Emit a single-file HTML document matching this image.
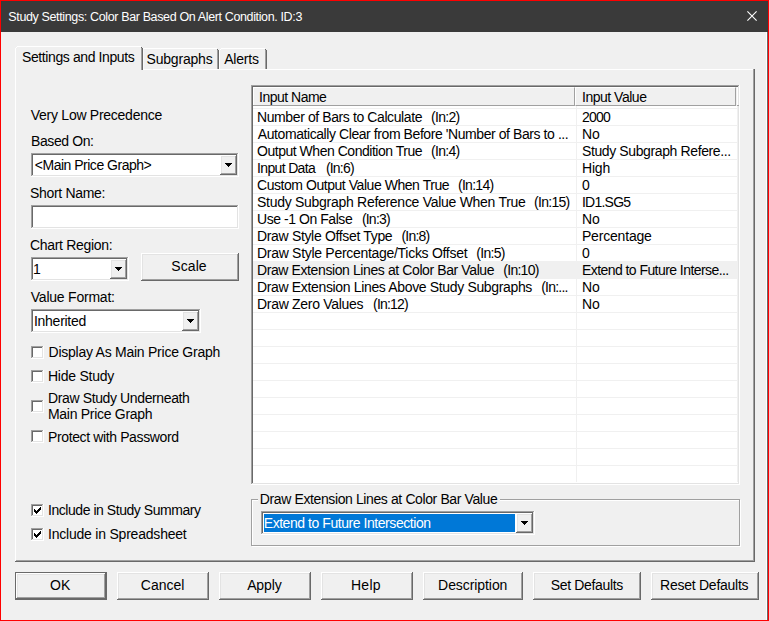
<!DOCTYPE html>
<html><head><meta charset="utf-8">
<style>
*{margin:0;padding:0;box-sizing:border-box}
html,body{width:769px;height:621px;overflow:hidden;background:#f0f0f0}
body{position:relative;font-family:"Liberation Sans",sans-serif;font-size:14px;color:#000}
.a{position:absolute}
.t{position:absolute;white-space:nowrap;line-height:16px;font-size:14px}
.sk{position:absolute;border:1px solid;border-color:#a0a0a0 #fff #fff #a0a0a0}
.sk>.in{position:absolute;left:0;top:0;right:0;bottom:0;border:1px solid;border-color:#696969 #e3e3e3 #e3e3e3 #696969;background:#fff}
.bt{position:absolute;border:1px solid;border-color:#fff #696969 #696969 #fff;background:#f0f0f0}
.bt>.in{position:absolute;left:0;top:0;right:0;bottom:0;border:1px solid;border-color:#e3e3e3 #a0a0a0 #a0a0a0 #e3e3e3}
.arr{position:absolute;width:7px;height:4px}
.arr svg{display:block}
.cb{position:absolute;width:13px;height:13px;border:1px solid;border-color:#a0a0a0 #fff #fff #a0a0a0}
.cb>.in{position:absolute;left:0;top:0;right:0;bottom:0;border:1px solid;border-color:#696969 #e3e3e3 #e3e3e3 #696969;background:#fff}
.ck{position:absolute;left:1px;top:1px}
</style></head><body>
<div class="a" style="left:0;top:0;width:769px;height:621px;border:1px solid #f00"></div>
<div class="a" style="left:1px;top:1px;width:767px;height:31px;background:#3a3a3a"></div>
<svg class="a" style="left:746px;top:10px" width="12" height="12" viewBox="0 0 12 12"><path d="M1.4 1.4L10.6 10.6M10.6 1.4L1.4 10.6" stroke="#fff" stroke-width="1.1"/></svg>
<div class="a" style="left:766px;top:32px;width:1px;height:588px;background:#fff"></div>
<div class="a" style="left:767px;top:32px;width:1px;height:588px;background:#696969"></div>

<div class="a" style="left:15px;top:69px;width:739px;height:1px;background:#fff"></div>
<div class="a" style="left:15px;top:69px;width:1px;height:492px;background:#fff"></div>
<div class="a" style="left:753px;top:69px;width:1px;height:492px;background:#a0a0a0"></div>
<div class="a" style="left:754px;top:69px;width:1px;height:493px;background:#696969"></div>
<div class="a" style="left:16px;top:560px;width:737px;height:1px;background:#a0a0a0"></div>
<div class="a" style="left:15px;top:561px;width:740px;height:1px;background:#696969"></div>
<div class="a" style="left:143px;top:48px;width:74px;height:1px;background:#fff"></div>
<div class="a" style="left:143px;top:49px;width:1px;height:20px;background:#f8f8f8"></div>
<div class="a" style="left:217px;top:49px;width:1px;height:20px;background:#a0a0a0"></div>
<div class="a" style="left:217px;top:49px;width:1px;height:1px;background:#696969"></div>
<div class="a" style="left:218px;top:50px;width:1px;height:19px;background:#696969"></div>
<div class="a" style="left:221px;top:48px;width:44px;height:1px;background:#fff"></div>
<div class="a" style="left:220px;top:49px;width:1px;height:1px;background:#fff"></div>
<div class="a" style="left:219px;top:50px;width:1px;height:19px;background:#fff"></div>
<div class="a" style="left:265px;top:49px;width:1px;height:20px;background:#a0a0a0"></div>
<div class="a" style="left:265px;top:49px;width:1px;height:1px;background:#696969"></div>
<div class="a" style="left:266px;top:50px;width:1px;height:19px;background:#696969"></div>
<div class="a" style="left:15px;top:46px;width:128px;height:25px;background:#f0f0f0"></div>
<div class="a" style="left:17px;top:46px;width:124px;height:1px;background:#fff"></div>
<div class="a" style="left:16px;top:47px;width:1px;height:1px;background:#fff"></div>
<div class="a" style="left:15px;top:48px;width:1px;height:23px;background:#fff"></div>
<div class="a" style="left:141px;top:47px;width:1px;height:23px;background:#a0a0a0"></div>
<div class="a" style="left:141px;top:47px;width:1px;height:1px;background:#696969"></div>
<div class="a" style="left:142px;top:48px;width:1px;height:22px;background:#696969"></div>

<div class="a" style="left:33px;top:155px;width:204px;height:20px;background:#fff"></div><div class="a" style="left:31px;top:153px;width:207px;height:1px;background:#a0a0a0"></div><div class="a" style="left:31px;top:153px;width:1px;height:23px;background:#a0a0a0"></div><div class="a" style="left:31px;top:176px;width:208px;height:1px;background:#fff"></div><div class="a" style="left:238px;top:153px;width:1px;height:24px;background:#fff"></div><div class="a" style="left:32px;top:154px;width:205px;height:1px;background:#696969"></div><div class="a" style="left:32px;top:154px;width:1px;height:21px;background:#696969"></div><div class="a" style="left:32px;top:175px;width:206px;height:1px;background:#e3e3e3"></div><div class="a" style="left:237px;top:154px;width:1px;height:22px;background:#e3e3e3"></div>
<div class="a" style="left:222px;top:157px;width:13px;height:16px;background:#f0f0f0"></div><div class="a" style="left:220px;top:155px;width:16px;height:1px;background:#fff"></div><div class="a" style="left:220px;top:155px;width:1px;height:19px;background:#fff"></div><div class="a" style="left:220px;top:174px;width:17px;height:1px;background:#696969"></div><div class="a" style="left:236px;top:155px;width:1px;height:20px;background:#696969"></div><div class="a" style="left:221px;top:156px;width:14px;height:1px;background:#e3e3e3"></div><div class="a" style="left:221px;top:156px;width:1px;height:17px;background:#e3e3e3"></div><div class="a" style="left:221px;top:173px;width:15px;height:1px;background:#a0a0a0"></div><div class="a" style="left:235px;top:156px;width:1px;height:18px;background:#a0a0a0"></div>
<div class="arr" style="left:225px;top:163px"><svg width="7" height="4" viewBox="0 0 7 4" shape-rendering="crispEdges"><path d="M0 0h7v1h-7zM1 1h5v1h-5zM2 2h3v1h-3zM3 3h1v1h-1z" fill="#000"/></svg></div>

<div class="a" style="left:33px;top:207px;width:204px;height:20px;background:#fff"></div><div class="a" style="left:31px;top:205px;width:207px;height:1px;background:#a0a0a0"></div><div class="a" style="left:31px;top:205px;width:1px;height:23px;background:#a0a0a0"></div><div class="a" style="left:31px;top:228px;width:208px;height:1px;background:#fff"></div><div class="a" style="left:238px;top:205px;width:1px;height:24px;background:#fff"></div><div class="a" style="left:32px;top:206px;width:205px;height:1px;background:#696969"></div><div class="a" style="left:32px;top:206px;width:1px;height:21px;background:#696969"></div><div class="a" style="left:32px;top:227px;width:206px;height:1px;background:#e3e3e3"></div><div class="a" style="left:237px;top:206px;width:1px;height:22px;background:#e3e3e3"></div>

<div class="a" style="left:33px;top:259px;width:94px;height:20px;background:#fff"></div><div class="a" style="left:31px;top:257px;width:97px;height:1px;background:#a0a0a0"></div><div class="a" style="left:31px;top:257px;width:1px;height:23px;background:#a0a0a0"></div><div class="a" style="left:31px;top:280px;width:98px;height:1px;background:#fff"></div><div class="a" style="left:128px;top:257px;width:1px;height:24px;background:#fff"></div><div class="a" style="left:32px;top:258px;width:95px;height:1px;background:#696969"></div><div class="a" style="left:32px;top:258px;width:1px;height:21px;background:#696969"></div><div class="a" style="left:32px;top:279px;width:96px;height:1px;background:#e3e3e3"></div><div class="a" style="left:127px;top:258px;width:1px;height:22px;background:#e3e3e3"></div>
<div class="a" style="left:112px;top:261px;width:13px;height:16px;background:#f0f0f0"></div><div class="a" style="left:110px;top:259px;width:16px;height:1px;background:#fff"></div><div class="a" style="left:110px;top:259px;width:1px;height:19px;background:#fff"></div><div class="a" style="left:110px;top:278px;width:17px;height:1px;background:#696969"></div><div class="a" style="left:126px;top:259px;width:1px;height:20px;background:#696969"></div><div class="a" style="left:111px;top:260px;width:14px;height:1px;background:#e3e3e3"></div><div class="a" style="left:111px;top:260px;width:1px;height:17px;background:#e3e3e3"></div><div class="a" style="left:111px;top:277px;width:15px;height:1px;background:#a0a0a0"></div><div class="a" style="left:125px;top:260px;width:1px;height:18px;background:#a0a0a0"></div>
<div class="arr" style="left:115px;top:267px"><svg width="7" height="4" viewBox="0 0 7 4" shape-rendering="crispEdges"><path d="M0 0h7v1h-7zM1 1h5v1h-5zM2 2h3v1h-3zM3 3h1v1h-1z" fill="#000"/></svg></div>
<div class="a" style="left:143px;top:255px;width:94px;height:24px;background:#f0f0f0"></div><div class="a" style="left:141px;top:253px;width:97px;height:1px;background:#fff"></div><div class="a" style="left:141px;top:253px;width:1px;height:27px;background:#fff"></div><div class="a" style="left:141px;top:280px;width:98px;height:1px;background:#696969"></div><div class="a" style="left:238px;top:253px;width:1px;height:28px;background:#696969"></div><div class="a" style="left:142px;top:254px;width:95px;height:1px;background:#e3e3e3"></div><div class="a" style="left:142px;top:254px;width:1px;height:25px;background:#e3e3e3"></div><div class="a" style="left:142px;top:279px;width:96px;height:1px;background:#a0a0a0"></div><div class="a" style="left:237px;top:254px;width:1px;height:26px;background:#a0a0a0"></div>

<div class="a" style="left:33px;top:311px;width:166px;height:20px;background:#fff"></div><div class="a" style="left:31px;top:309px;width:169px;height:1px;background:#a0a0a0"></div><div class="a" style="left:31px;top:309px;width:1px;height:23px;background:#a0a0a0"></div><div class="a" style="left:31px;top:332px;width:170px;height:1px;background:#fff"></div><div class="a" style="left:200px;top:309px;width:1px;height:24px;background:#fff"></div><div class="a" style="left:32px;top:310px;width:167px;height:1px;background:#696969"></div><div class="a" style="left:32px;top:310px;width:1px;height:21px;background:#696969"></div><div class="a" style="left:32px;top:331px;width:168px;height:1px;background:#e3e3e3"></div><div class="a" style="left:199px;top:310px;width:1px;height:22px;background:#e3e3e3"></div>
<div class="a" style="left:184px;top:313px;width:13px;height:16px;background:#f0f0f0"></div><div class="a" style="left:182px;top:311px;width:16px;height:1px;background:#fff"></div><div class="a" style="left:182px;top:311px;width:1px;height:19px;background:#fff"></div><div class="a" style="left:182px;top:330px;width:17px;height:1px;background:#696969"></div><div class="a" style="left:198px;top:311px;width:1px;height:20px;background:#696969"></div><div class="a" style="left:183px;top:312px;width:14px;height:1px;background:#e3e3e3"></div><div class="a" style="left:183px;top:312px;width:1px;height:17px;background:#e3e3e3"></div><div class="a" style="left:183px;top:329px;width:15px;height:1px;background:#a0a0a0"></div><div class="a" style="left:197px;top:312px;width:1px;height:18px;background:#a0a0a0"></div>
<div class="arr" style="left:187px;top:319px"><svg width="7" height="4" viewBox="0 0 7 4" shape-rendering="crispEdges"><path d="M0 0h7v1h-7zM1 1h5v1h-5zM2 2h3v1h-3zM3 3h1v1h-1z" fill="#000"/></svg></div>

<div class="a" style="left:33px;top:348px;width:9px;height:9px;background:#fff"></div><div class="a" style="left:31px;top:346px;width:12px;height:1px;background:#a0a0a0"></div><div class="a" style="left:31px;top:346px;width:1px;height:12px;background:#a0a0a0"></div><div class="a" style="left:31px;top:358px;width:13px;height:1px;background:#fff"></div><div class="a" style="left:43px;top:346px;width:1px;height:13px;background:#fff"></div><div class="a" style="left:32px;top:347px;width:10px;height:1px;background:#696969"></div><div class="a" style="left:32px;top:347px;width:1px;height:10px;background:#696969"></div><div class="a" style="left:32px;top:357px;width:11px;height:1px;background:#e3e3e3"></div><div class="a" style="left:42px;top:347px;width:1px;height:11px;background:#e3e3e3"></div>
<div class="a" style="left:33px;top:372px;width:9px;height:9px;background:#fff"></div><div class="a" style="left:31px;top:370px;width:12px;height:1px;background:#a0a0a0"></div><div class="a" style="left:31px;top:370px;width:1px;height:12px;background:#a0a0a0"></div><div class="a" style="left:31px;top:382px;width:13px;height:1px;background:#fff"></div><div class="a" style="left:43px;top:370px;width:1px;height:13px;background:#fff"></div><div class="a" style="left:32px;top:371px;width:10px;height:1px;background:#696969"></div><div class="a" style="left:32px;top:371px;width:1px;height:10px;background:#696969"></div><div class="a" style="left:32px;top:381px;width:11px;height:1px;background:#e3e3e3"></div><div class="a" style="left:42px;top:371px;width:1px;height:11px;background:#e3e3e3"></div>
<div class="a" style="left:33px;top:402px;width:9px;height:9px;background:#fff"></div><div class="a" style="left:31px;top:400px;width:12px;height:1px;background:#a0a0a0"></div><div class="a" style="left:31px;top:400px;width:1px;height:12px;background:#a0a0a0"></div><div class="a" style="left:31px;top:412px;width:13px;height:1px;background:#fff"></div><div class="a" style="left:43px;top:400px;width:1px;height:13px;background:#fff"></div><div class="a" style="left:32px;top:401px;width:10px;height:1px;background:#696969"></div><div class="a" style="left:32px;top:401px;width:1px;height:10px;background:#696969"></div><div class="a" style="left:32px;top:411px;width:11px;height:1px;background:#e3e3e3"></div><div class="a" style="left:42px;top:401px;width:1px;height:11px;background:#e3e3e3"></div>
<div class="a" style="left:33px;top:432px;width:9px;height:9px;background:#fff"></div><div class="a" style="left:31px;top:430px;width:12px;height:1px;background:#a0a0a0"></div><div class="a" style="left:31px;top:430px;width:1px;height:12px;background:#a0a0a0"></div><div class="a" style="left:31px;top:442px;width:13px;height:1px;background:#fff"></div><div class="a" style="left:43px;top:430px;width:1px;height:13px;background:#fff"></div><div class="a" style="left:32px;top:431px;width:10px;height:1px;background:#696969"></div><div class="a" style="left:32px;top:431px;width:1px;height:10px;background:#696969"></div><div class="a" style="left:32px;top:441px;width:11px;height:1px;background:#e3e3e3"></div><div class="a" style="left:42px;top:431px;width:1px;height:11px;background:#e3e3e3"></div>
<div class="a" style="left:33px;top:506px;width:9px;height:9px;background:#fff"></div><div class="a" style="left:31px;top:504px;width:12px;height:1px;background:#a0a0a0"></div><div class="a" style="left:31px;top:504px;width:1px;height:12px;background:#a0a0a0"></div><div class="a" style="left:31px;top:516px;width:13px;height:1px;background:#fff"></div><div class="a" style="left:43px;top:504px;width:1px;height:13px;background:#fff"></div><div class="a" style="left:32px;top:505px;width:10px;height:1px;background:#696969"></div><div class="a" style="left:32px;top:505px;width:1px;height:10px;background:#696969"></div><div class="a" style="left:32px;top:515px;width:11px;height:1px;background:#e3e3e3"></div><div class="a" style="left:42px;top:505px;width:1px;height:11px;background:#e3e3e3"></div><div class="a" style="left:33px;top:506px"><svg style="display:block" width="9" height="9" viewBox="0 0 9 9" shape-rendering="crispEdges"><path d="M7 1h1v1h-1zM6 2h2v1h-2zM1 3h1v1h-1zM5 3h3v1h-3zM1 4h2v1h-2zM4 4h3v1h-3zM1 5h5v1h-5zM2 6h3v1h-3zM3 7h1v1h-1z" fill="#000"/></svg></div>
<div class="a" style="left:33px;top:530px;width:9px;height:9px;background:#fff"></div><div class="a" style="left:31px;top:528px;width:12px;height:1px;background:#a0a0a0"></div><div class="a" style="left:31px;top:528px;width:1px;height:12px;background:#a0a0a0"></div><div class="a" style="left:31px;top:540px;width:13px;height:1px;background:#fff"></div><div class="a" style="left:43px;top:528px;width:1px;height:13px;background:#fff"></div><div class="a" style="left:32px;top:529px;width:10px;height:1px;background:#696969"></div><div class="a" style="left:32px;top:529px;width:1px;height:10px;background:#696969"></div><div class="a" style="left:32px;top:539px;width:11px;height:1px;background:#e3e3e3"></div><div class="a" style="left:42px;top:529px;width:1px;height:11px;background:#e3e3e3"></div><div class="a" style="left:33px;top:530px"><svg style="display:block" width="9" height="9" viewBox="0 0 9 9" shape-rendering="crispEdges"><path d="M7 1h1v1h-1zM6 2h2v1h-2zM1 3h1v1h-1zM5 3h3v1h-3zM1 4h2v1h-2zM4 4h3v1h-3zM1 5h5v1h-5zM2 6h3v1h-3zM3 7h1v1h-1z" fill="#000"/></svg></div>

<div class="a" style="left:253px;top:87px;width:485px;height:396px;background:#fff"></div><div class="a" style="left:251px;top:85px;width:488px;height:1px;background:#a0a0a0"></div><div class="a" style="left:251px;top:85px;width:1px;height:399px;background:#a0a0a0"></div><div class="a" style="left:251px;top:484px;width:489px;height:1px;background:#fff"></div><div class="a" style="left:739px;top:85px;width:1px;height:400px;background:#fff"></div><div class="a" style="left:252px;top:86px;width:486px;height:1px;background:#696969"></div><div class="a" style="left:252px;top:86px;width:1px;height:397px;background:#696969"></div><div class="a" style="left:252px;top:483px;width:487px;height:1px;background:#e3e3e3"></div><div class="a" style="left:738px;top:86px;width:1px;height:398px;background:#e3e3e3"></div>
<div class="a" style="left:253px;top:87px;width:484px;height:19px;background:#f0f0f0"></div>
<div class="a" style="left:253px;top:87px;width:322px;height:19px;border:1px solid;border-color:#fff #a0a0a0 #a0a0a0 #fff"></div>
<div class="a" style="left:575px;top:87px;width:161px;height:19px;border:1px solid;border-color:#fff #a0a0a0 #a0a0a0 #fff"></div>
<div class="a" style="left:253px;top:105px;width:322px;height:1px;background:#a0a0a0"></div>
<div class="a" style="left:737px;top:105px;width:2px;height:1px;background:#a0a0a0"></div>
<div class="a" style="left:737px;top:106px;width:1px;height:376px;background:#f0f0f0"></div>
<div class="a" style="left:253px;top:261px;width:485px;height:18px;background:#f0f0f0"></div>
<div class="a" style="left:253px;top:108px;width:485px;height:1px;background:#f0f0f0"></div>
<div class="a" style="left:253px;top:125px;width:485px;height:1px;background:#f0f0f0"></div>
<div class="a" style="left:253px;top:142px;width:485px;height:1px;background:#f0f0f0"></div>
<div class="a" style="left:253px;top:159px;width:485px;height:1px;background:#f0f0f0"></div>
<div class="a" style="left:253px;top:176px;width:485px;height:1px;background:#f0f0f0"></div>
<div class="a" style="left:253px;top:193px;width:485px;height:1px;background:#f0f0f0"></div>
<div class="a" style="left:253px;top:210px;width:485px;height:1px;background:#f0f0f0"></div>
<div class="a" style="left:253px;top:227px;width:485px;height:1px;background:#f0f0f0"></div>
<div class="a" style="left:253px;top:244px;width:485px;height:1px;background:#f0f0f0"></div>
<div class="a" style="left:253px;top:261px;width:485px;height:1px;background:#f0f0f0"></div>
<div class="a" style="left:253px;top:278px;width:485px;height:1px;background:#f0f0f0"></div>
<div class="a" style="left:253px;top:295px;width:485px;height:1px;background:#f0f0f0"></div>
<div class="a" style="left:253px;top:312px;width:485px;height:1px;background:#f0f0f0"></div>
<div class="a" style="left:253px;top:329px;width:485px;height:1px;background:#f0f0f0"></div>
<div class="a" style="left:253px;top:346px;width:485px;height:1px;background:#f0f0f0"></div>
<div class="a" style="left:253px;top:363px;width:485px;height:1px;background:#f0f0f0"></div>
<div class="a" style="left:253px;top:380px;width:485px;height:1px;background:#f0f0f0"></div>
<div class="a" style="left:253px;top:397px;width:485px;height:1px;background:#f0f0f0"></div>
<div class="a" style="left:253px;top:414px;width:485px;height:1px;background:#f0f0f0"></div>
<div class="a" style="left:253px;top:431px;width:485px;height:1px;background:#f0f0f0"></div>
<div class="a" style="left:253px;top:448px;width:485px;height:1px;background:#f0f0f0"></div>
<div class="a" style="left:253px;top:465px;width:485px;height:1px;background:#f0f0f0"></div>
<div class="a" style="left:576px;top:106px;width:1px;height:376px;background:#f0f0f0"></div>

<div class="a" style="left:252px;top:500px;width:489px;height:47px;border:1px solid #fff"></div>
<div class="a" style="left:251px;top:499px;width:489px;height:47px;border:1px solid #a0a0a0"></div>
<div class="a" style="left:258px;top:499px;width:242px;height:2px;background:#f0f0f0"></div>
<div class="a" style="left:263px;top:513px;width:270px;height:20px;background:#fff"></div><div class="a" style="left:261px;top:511px;width:273px;height:1px;background:#a0a0a0"></div><div class="a" style="left:261px;top:511px;width:1px;height:23px;background:#a0a0a0"></div><div class="a" style="left:261px;top:534px;width:274px;height:1px;background:#fff"></div><div class="a" style="left:534px;top:511px;width:1px;height:24px;background:#fff"></div><div class="a" style="left:262px;top:512px;width:271px;height:1px;background:#696969"></div><div class="a" style="left:262px;top:512px;width:1px;height:21px;background:#696969"></div><div class="a" style="left:262px;top:533px;width:272px;height:1px;background:#e3e3e3"></div><div class="a" style="left:533px;top:512px;width:1px;height:22px;background:#e3e3e3"></div>
<div class="a" style="left:263px;top:513px;width:253px;height:20px;background:#0078d7;border:1px solid #fff"></div>
<div class="a" style="left:518px;top:515px;width:13px;height:16px;background:#f0f0f0"></div><div class="a" style="left:516px;top:513px;width:16px;height:1px;background:#fff"></div><div class="a" style="left:516px;top:513px;width:1px;height:19px;background:#fff"></div><div class="a" style="left:516px;top:532px;width:17px;height:1px;background:#696969"></div><div class="a" style="left:532px;top:513px;width:1px;height:20px;background:#696969"></div><div class="a" style="left:517px;top:514px;width:14px;height:1px;background:#e3e3e3"></div><div class="a" style="left:517px;top:514px;width:1px;height:17px;background:#e3e3e3"></div><div class="a" style="left:517px;top:531px;width:15px;height:1px;background:#a0a0a0"></div><div class="a" style="left:531px;top:514px;width:1px;height:18px;background:#a0a0a0"></div>
<div class="arr" style="left:521px;top:521px"><svg width="7" height="4" viewBox="0 0 7 4" shape-rendering="crispEdges"><path d="M0 0h7v1h-7zM1 1h5v1h-5zM2 2h3v1h-3zM3 3h1v1h-1z" fill="#000"/></svg></div>

<div class="a" style="left:15px;top:572px;width:92px;height:28px;border:1px solid #696969"></div>
<div class="a" style="left:18px;top:575px;width:86px;height:22px;background:#f0f0f0"></div><div class="a" style="left:16px;top:573px;width:89px;height:1px;background:#fff"></div><div class="a" style="left:16px;top:573px;width:1px;height:25px;background:#fff"></div><div class="a" style="left:16px;top:598px;width:90px;height:1px;background:#696969"></div><div class="a" style="left:105px;top:573px;width:1px;height:26px;background:#696969"></div><div class="a" style="left:17px;top:574px;width:87px;height:1px;background:#e3e3e3"></div><div class="a" style="left:17px;top:574px;width:1px;height:23px;background:#e3e3e3"></div><div class="a" style="left:17px;top:597px;width:88px;height:1px;background:#a0a0a0"></div><div class="a" style="left:104px;top:574px;width:1px;height:24px;background:#a0a0a0"></div>
<div class="a" style="left:119px;top:574px;width:88px;height:24px;background:#f0f0f0"></div><div class="a" style="left:117px;top:572px;width:91px;height:1px;background:#fff"></div><div class="a" style="left:117px;top:572px;width:1px;height:27px;background:#fff"></div><div class="a" style="left:117px;top:599px;width:92px;height:1px;background:#696969"></div><div class="a" style="left:208px;top:572px;width:1px;height:28px;background:#696969"></div><div class="a" style="left:118px;top:573px;width:89px;height:1px;background:#e3e3e3"></div><div class="a" style="left:118px;top:573px;width:1px;height:25px;background:#e3e3e3"></div><div class="a" style="left:118px;top:598px;width:90px;height:1px;background:#a0a0a0"></div><div class="a" style="left:207px;top:573px;width:1px;height:26px;background:#a0a0a0"></div>
<div class="a" style="left:221px;top:574px;width:88px;height:24px;background:#f0f0f0"></div><div class="a" style="left:219px;top:572px;width:91px;height:1px;background:#fff"></div><div class="a" style="left:219px;top:572px;width:1px;height:27px;background:#fff"></div><div class="a" style="left:219px;top:599px;width:92px;height:1px;background:#696969"></div><div class="a" style="left:310px;top:572px;width:1px;height:28px;background:#696969"></div><div class="a" style="left:220px;top:573px;width:89px;height:1px;background:#e3e3e3"></div><div class="a" style="left:220px;top:573px;width:1px;height:25px;background:#e3e3e3"></div><div class="a" style="left:220px;top:598px;width:90px;height:1px;background:#a0a0a0"></div><div class="a" style="left:309px;top:573px;width:1px;height:26px;background:#a0a0a0"></div>
<div class="a" style="left:323px;top:574px;width:88px;height:24px;background:#f0f0f0"></div><div class="a" style="left:321px;top:572px;width:91px;height:1px;background:#fff"></div><div class="a" style="left:321px;top:572px;width:1px;height:27px;background:#fff"></div><div class="a" style="left:321px;top:599px;width:92px;height:1px;background:#696969"></div><div class="a" style="left:412px;top:572px;width:1px;height:28px;background:#696969"></div><div class="a" style="left:322px;top:573px;width:89px;height:1px;background:#e3e3e3"></div><div class="a" style="left:322px;top:573px;width:1px;height:25px;background:#e3e3e3"></div><div class="a" style="left:322px;top:598px;width:90px;height:1px;background:#a0a0a0"></div><div class="a" style="left:411px;top:573px;width:1px;height:26px;background:#a0a0a0"></div>
<div class="a" style="left:425px;top:574px;width:96px;height:24px;background:#f0f0f0"></div><div class="a" style="left:423px;top:572px;width:99px;height:1px;background:#fff"></div><div class="a" style="left:423px;top:572px;width:1px;height:27px;background:#fff"></div><div class="a" style="left:423px;top:599px;width:100px;height:1px;background:#696969"></div><div class="a" style="left:522px;top:572px;width:1px;height:28px;background:#696969"></div><div class="a" style="left:424px;top:573px;width:97px;height:1px;background:#e3e3e3"></div><div class="a" style="left:424px;top:573px;width:1px;height:25px;background:#e3e3e3"></div><div class="a" style="left:424px;top:598px;width:98px;height:1px;background:#a0a0a0"></div><div class="a" style="left:521px;top:573px;width:1px;height:26px;background:#a0a0a0"></div>
<div class="a" style="left:535px;top:574px;width:104px;height:24px;background:#f0f0f0"></div><div class="a" style="left:533px;top:572px;width:107px;height:1px;background:#fff"></div><div class="a" style="left:533px;top:572px;width:1px;height:27px;background:#fff"></div><div class="a" style="left:533px;top:599px;width:108px;height:1px;background:#696969"></div><div class="a" style="left:640px;top:572px;width:1px;height:28px;background:#696969"></div><div class="a" style="left:534px;top:573px;width:105px;height:1px;background:#e3e3e3"></div><div class="a" style="left:534px;top:573px;width:1px;height:25px;background:#e3e3e3"></div><div class="a" style="left:534px;top:598px;width:106px;height:1px;background:#a0a0a0"></div><div class="a" style="left:639px;top:573px;width:1px;height:26px;background:#a0a0a0"></div>
<div class="a" style="left:653px;top:574px;width:104px;height:24px;background:#f0f0f0"></div><div class="a" style="left:651px;top:572px;width:107px;height:1px;background:#fff"></div><div class="a" style="left:651px;top:572px;width:1px;height:27px;background:#fff"></div><div class="a" style="left:651px;top:599px;width:108px;height:1px;background:#696969"></div><div class="a" style="left:758px;top:572px;width:1px;height:28px;background:#696969"></div><div class="a" style="left:652px;top:573px;width:105px;height:1px;background:#e3e3e3"></div><div class="a" style="left:652px;top:573px;width:1px;height:25px;background:#e3e3e3"></div><div class="a" style="left:652px;top:598px;width:106px;height:1px;background:#a0a0a0"></div><div class="a" style="left:757px;top:573px;width:1px;height:26px;background:#a0a0a0"></div>
<div class="t" style="left:8.30px;top:9px;letter-spacing:-0.364px;color:#fff;font-size:12.5px">Study Settings: Color Bar Based On Alert Condition. ID:3</div>
<div class="t" style="left:146.54px;top:51px;letter-spacing:-0.200px;">Subgraphs</div>
<div class="t" style="left:224.26px;top:51px;letter-spacing:-0.224px;">Alerts</div>
<div class="t" style="left:22.00px;top:49px;letter-spacing:-0.400px;">Settings and Inputs</div>
<div class="t" style="left:30.80px;top:107px;letter-spacing:-0.267px;">Very Low Precedence</div>
<div class="t" style="left:31.00px;top:133px;letter-spacing:-0.400px;">Based On:</div>
<div class="t" style="left:34.80px;top:157px;letter-spacing:-0.494px;">&lt;Main Price Graph&gt;</div>
<div class="t" style="left:30.00px;top:185px;letter-spacing:-0.320px;">Short Name:</div>
<div class="t" style="left:30.00px;top:237px;letter-spacing:-0.307px;">Chart Region:</div>
<div class="t" style="left:33.10px;top:261px;letter-spacing:0.000px;">1</div>
<div class="t" style="left:171.36px;top:258px;letter-spacing:0.060px;">Scale</div>
<div class="t" style="left:30.80px;top:289px;letter-spacing:-0.227px;">Value Format:</div>
<div class="t" style="left:34.00px;top:313px;letter-spacing:-0.280px;">Inherited</div>
<div class="t" style="left:48.54px;top:344px;letter-spacing:-0.249px;">Display As Main Price Graph</div>
<div class="t" style="left:48.00px;top:368px;letter-spacing:-0.249px;">Hide Study</div>
<div class="t" style="left:48.00px;top:390px;letter-spacing:-0.376px;">Draw Study Underneath</div>
<div class="t" style="left:48.00px;top:406px;letter-spacing:-0.293px;">Main Price Graph</div>
<div class="t" style="left:48.00px;top:429px;letter-spacing:-0.376px;">Protect with Password</div>
<div class="t" style="left:48.00px;top:502px;letter-spacing:-0.452px;">Include in Study Summary</div>
<div class="t" style="left:48.00px;top:526px;letter-spacing:-0.213px;">Include in Spreadsheet</div>
<div class="t" style="left:259.00px;top:89px;letter-spacing:-0.498px;">Input Name</div>
<div class="t" style="left:582.00px;top:89px;letter-spacing:-0.488px;">Input Value</div>
<div class="t" style="left:257.00px;top:109px;letter-spacing:-0.400px;">Number of Bars to Calculate</div>
<div class="t" style="left:431.00px;top:109px;letter-spacing:-0.688px;">(In:2)</div>
<div class="t" style="left:581.96px;top:109px;letter-spacing:-0.800px;">2000</div>
<div class="t" style="left:257.80px;top:126px;letter-spacing:-0.423px;">Automatically Clear from Before 'Number of Bars to ...</div>
<div class="t" style="left:581.96px;top:126px;letter-spacing:0.000px;">No</div>
<div class="t" style="left:257.00px;top:143px;letter-spacing:-0.474px;">Output When Condition True</div>
<div class="t" style="left:431.00px;top:143px;letter-spacing:-0.688px;">(In:4)</div>
<div class="t" style="left:581.96px;top:143px;letter-spacing:-0.383px;">Study Subgraph Refere...</div>
<div class="t" style="left:257.00px;top:160px;letter-spacing:-0.649px;">Input Data</div>
<div class="t" style="left:325.90px;top:160px;letter-spacing:-0.800px;">(In:6)</div>
<div class="t" style="left:581.96px;top:160px;letter-spacing:-0.187px;">High</div>
<div class="t" style="left:257.00px;top:177px;letter-spacing:-0.451px;">Custom Output Value When True</div>
<div class="t" style="left:458.00px;top:177px;letter-spacing:-0.720px;">(In:14)</div>
<div class="t" style="left:581.96px;top:177px;letter-spacing:0.000px;">0</div>
<div class="t" style="left:257.00px;top:194px;letter-spacing:-0.283px;">Study Subgraph Reference Value When True</div>
<div class="t" style="left:534.00px;top:194px;letter-spacing:-0.707px;">(In:15)</div>
<div class="t" style="left:581.96px;top:194px;letter-spacing:-0.760px;">ID1.SG5</div>
<div class="t" style="left:257.00px;top:211px;letter-spacing:-0.446px;">Use -1 On False</div>
<div class="t" style="left:361.90px;top:211px;letter-spacing:-0.784px;">(In:3)</div>
<div class="t" style="left:581.96px;top:211px;letter-spacing:0.000px;">No</div>
<div class="t" style="left:257.00px;top:228px;letter-spacing:-0.335px;">Draw Style Offset Type</div>
<div class="t" style="left:401.46px;top:228px;letter-spacing:-0.800px;">(In:8)</div>
<div class="t" style="left:581.96px;top:228px;letter-spacing:-0.187px;">Percentage</div>
<div class="t" style="left:257.00px;top:245px;letter-spacing:-0.293px;">Draw Style Percentage/Ticks Offset</div>
<div class="t" style="left:476.36px;top:245px;letter-spacing:-0.736px;">(In:5)</div>
<div class="t" style="left:581.96px;top:245px;letter-spacing:0.000px;">0</div>
<div class="t" style="left:257.00px;top:262px;letter-spacing:-0.398px;">Draw Extension Lines at Color Bar Value</div>
<div class="t" style="left:503.36px;top:262px;letter-spacing:-0.747px;">(In:10)</div>
<div class="t" style="left:581.96px;top:262px;letter-spacing:-0.560px;">Extend to Future Interse...</div>
<div class="t" style="left:257.00px;top:279px;letter-spacing:-0.345px;">Draw Extension Lines Above Study Subgraphs</div>
<div class="t" style="left:541.18px;top:279px;letter-spacing:-0.760px;">(In:...</div>
<div class="t" style="left:581.96px;top:279px;letter-spacing:0.000px;">No</div>
<div class="t" style="left:257.00px;top:296px;letter-spacing:-0.304px;">Draw Zero Values</div>
<div class="t" style="left:373.08px;top:296px;letter-spacing:-0.800px;">(In:12)</div>
<div class="t" style="left:581.96px;top:296px;letter-spacing:0.000px;">No</div>
<div class="t" style="left:259.82px;top:491px;letter-spacing:-0.387px;">Draw Extension Lines at Color Bar Value</div>
<div class="t" style="left:263.74px;top:515px;letter-spacing:-0.446px;color:#fff">Extend to Future Intersection</div>
<div class="t" style="left:50.00px;top:577px;letter-spacing:0.000px;">OK</div>
<div class="t" style="left:140.82px;top:577px;letter-spacing:-0.016px;">Cancel</div>
<div class="t" style="left:247.16px;top:577px;letter-spacing:-0.120px;">Apply</div>
<div class="t" style="left:350.92px;top:577px;letter-spacing:0.293px;">Help</div>
<div class="t" style="left:438.10px;top:577px;letter-spacing:-0.072px;">Description</div>
<div class="t" style="left:550.72px;top:577px;letter-spacing:-0.342px;">Set Defaults</div>
<div class="t" style="left:660.10px;top:577px;letter-spacing:-0.258px;">Reset Defaults</div>
</body></html>
